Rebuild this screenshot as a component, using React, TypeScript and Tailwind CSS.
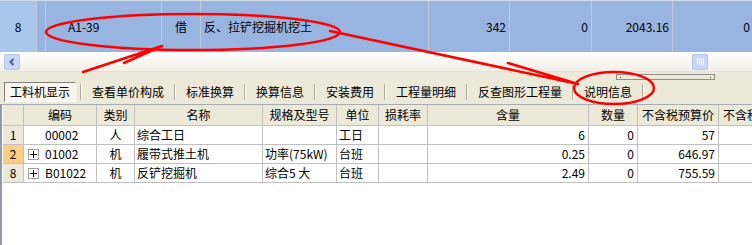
import React from "react";

const topCells = [
  { w: "w-[9px]", text: "", align: "" },
  { w: "w-[116px]", text: "A1-39", align: "pl-[22px]" },
  { w: "w-[39px]", text: "借", align: "justify-center" },
  { w: "w-[228px]", text: "反、拉铲挖掘机挖土", align: "pl-[3px]" },
  { w: "w-[81px]", text: "342", align: "justify-end pr-[3px]" },
  { w: "w-[82px]", text: "0", align: "justify-end pr-[3px]" },
  { w: "w-[81px]", text: "2043.16", align: "justify-end pr-[3px]" },
  { w: "w-[81px]", text: "0", align: "justify-end pr-[3px]" },
];

const tabs = ["查看单价构成", "标准换算", "换算信息", "安装费用", "工程量明细", "反查图形工程量", "说明信息"];

const cols = [
  { w: "w-[73px]", label: "编码" },
  { w: "w-[38px]", label: "类别" },
  { w: "w-[128px]", label: "名称" },
  { w: "w-[74px]", label: "规格及型号" },
  { w: "w-[42px]", label: "单位" },
  { w: "w-[49px]", label: "损耗率" },
  { w: "w-[161px]", label: "含量" },
  { w: "w-[49px]", label: "数量" },
  { w: "w-[81px]", label: "不含税预算价" },
  { w: "w-[81px]", label: "不含税预算价" },
];

const rows = [
  { n: "1", tree: false, code: "00002", kind: "人", name: "综合工日", spec: "", unit: "工日", qty: "6", count: "0", price: "57" },
  { n: "2", tree: true, code: "01002", kind: "机", name: "履带式推土机", spec: "功率(75kW)", unit: "台班", qty: "0.25", count: "0", price: "646.97" },
  { n: "8", tree: true, code: "B01022", kind: "机", name: "反铲挖掘机", spec: "综合5 大", unit: "台班", qty: "2.49", count: "0", price: "755.59" },
];

function Sep() {
  return <div className="h-[16px] w-[2px] shrink-0 border-l border-[#aca899] bg-white" />;
}

export default function App() {
  return (
    <div className="relative h-[245px] w-[752px] overflow-hidden bg-[#ece9d8] font-['Noto_Sans_CJK_SC','Noto_Sans',sans-serif] text-[12px] leading-none text-black">
      {/* selected quota row */}
      <div className="flex h-[52px] border-t border-[#d4dcea] bg-[#98b4e0]">
        <div className="flex w-[37px] shrink-0 items-center justify-center border-r border-[#c4ccd8] bg-[#a7c8ea]">8</div>
        {topCells.map((c, i) => (
          <div key={i} className={`flex shrink-0 items-center border-r border-[#c4c8d0] ${c.w} ${c.align}`}>
            {c.text}
          </div>
        ))}
      </div>

      {/* horizontal scrollbar */}
      <div className="flex h-[20px] items-center border-b border-[#e4e2d8] bg-gradient-to-b from-[#ffffff] to-[#f1efe6] px-[4px]">
        <div className="flex h-[16px] w-[16px] items-center justify-center rounded-[2px] border border-[#b8c8ec] bg-[#c8d8f8]">
          <svg width="8" height="8" viewBox="0 0 8 8" fill="none" stroke="#4d6185" strokeWidth="2">
            <path d="M5.5 1 L2.5 4 L5.5 7" />
          </svg>
        </div>
        <div className="ml-[672px] flex h-[16px] w-[16px] items-center justify-center gap-[1px] rounded-[2px] border border-[#b0c4ee] bg-[#c6d6fa]">
          <span className="h-[7px] w-px bg-white" />
          <span className="h-[7px] w-px bg-white" />
          <span className="h-[7px] w-px bg-white" />
          <span className="h-[7px] w-px bg-white" />
        </div>
      </div>

      {/* tab strip */}
      <div className="flex h-[10px] items-start">
        <div className="ml-[616px] mt-[2px] flex h-[6px] w-[99px] items-center justify-between border border-[#8c8c8c] px-[3px]">
          <span className="h-px w-px bg-[#3030c0]" />
          <span className="h-px w-px bg-[#3030c0]" />
        </div>
      </div>
      <div className="flex h-[20px] items-center pl-[4px]">
        <div className="flex h-[20px] w-[72px] items-center justify-center border border-b-white border-l-[#808080] border-r-white border-t-[#808080] bg-[#f6f5f0]">
          工料机显示
        </div>
        <div className="w-[4px]" />
        {tabs.map((t) => (
          <React.Fragment key={t}>
            <Sep />
            <div className="px-[10px]">{t}</div>
          </React.Fragment>
        ))}
        <Sep />
      </div>

      {/* resource grid */}
      <div className="mt-[2px] h-[141px] border-l-2 border-t border-l-[#8f9aaa] border-t-[#a5acb5] bg-white pl-px">
        <div className="flex h-[21px] border-b border-[#c0c0c0] bg-[#ece9d8]">
          <div className="w-[21px] shrink-0 border-r border-[#c0c0c0]" />
          {cols.map((c, i) => (
            <div key={i} className={`flex shrink-0 items-center justify-center border-r border-[#c0c0c0] whitespace-nowrap ${c.w}`}>
              {c.label}
            </div>
          ))}
        </div>
        {rows.map((r) => (
          <div key={r.n} className="flex h-[19px] border-b border-[#c0c0c0]">
            <div className={`flex w-[21px] shrink-0 items-center justify-center border-r border-[#c0c0c0] ${r.n === "2" ? "bg-[#ffcd88]" : "bg-[#ece9d8]"}`}>
              {r.n}
            </div>
            <div className="flex w-[73px] shrink-0 items-center border-r border-[#c0c0c0] pl-[4px]">
              <div className={`flex h-[11px] w-[11px] items-center justify-center border ${r.tree ? "border-[#a0a0a0]" : "border-transparent"}`}>
                {r.tree && (
                  <svg width="7" height="7" viewBox="0 0 7 7" stroke="#000" strokeWidth="1">
                    <path d="M0 3.5 H7 M3.5 0 V7" />
                  </svg>
                )}
              </div>
              <span className="ml-[6px]">{r.code}</span>
            </div>
            <div className="flex w-[38px] shrink-0 items-center justify-center border-r border-[#c0c0c0]">{r.kind}</div>
            <div className="flex w-[128px] shrink-0 items-center border-r border-[#c0c0c0] pl-[2px]">{r.name}</div>
            <div className="flex w-[74px] shrink-0 items-center border-r border-[#c0c0c0] pl-[2px] whitespace-nowrap">{r.spec}</div>
            <div className="flex w-[42px] shrink-0 items-center border-r border-[#c0c0c0] pl-[2px]">{r.unit}</div>
            <div className="w-[49px] shrink-0 border-r border-[#c0c0c0]" />
            <div className="flex w-[161px] shrink-0 items-center justify-end border-r border-[#c0c0c0] pr-[3px]">{r.qty}</div>
            <div className="flex w-[49px] shrink-0 items-center justify-end border-r border-[#c0c0c0] pr-[3px]">{r.count}</div>
            <div className="flex w-[81px] shrink-0 items-center justify-end border-r border-[#c0c0c0] pr-[3px]">{r.price}</div>
            <div className="w-[81px] shrink-0 border-r border-[#c0c0c0]" />
          </div>
        ))}
      </div>

      {/* red hand-drawn annotations */}
      <svg className="pointer-events-none absolute left-0 top-0" width="752" height="245" fill="none" stroke="#ff0000" strokeWidth="2.5" strokeLinecap="round">
        <ellipse cx="193" cy="32" rx="147" ry="18" />
        <path d="M83 72 L162 46 M124 63 L162 46" />
        <path d="M330 31 L578 84 M508 63 L578 84" />
        <ellipse cx="614" cy="88" rx="40" ry="16" />
      </svg>
    </div>
  );
}
